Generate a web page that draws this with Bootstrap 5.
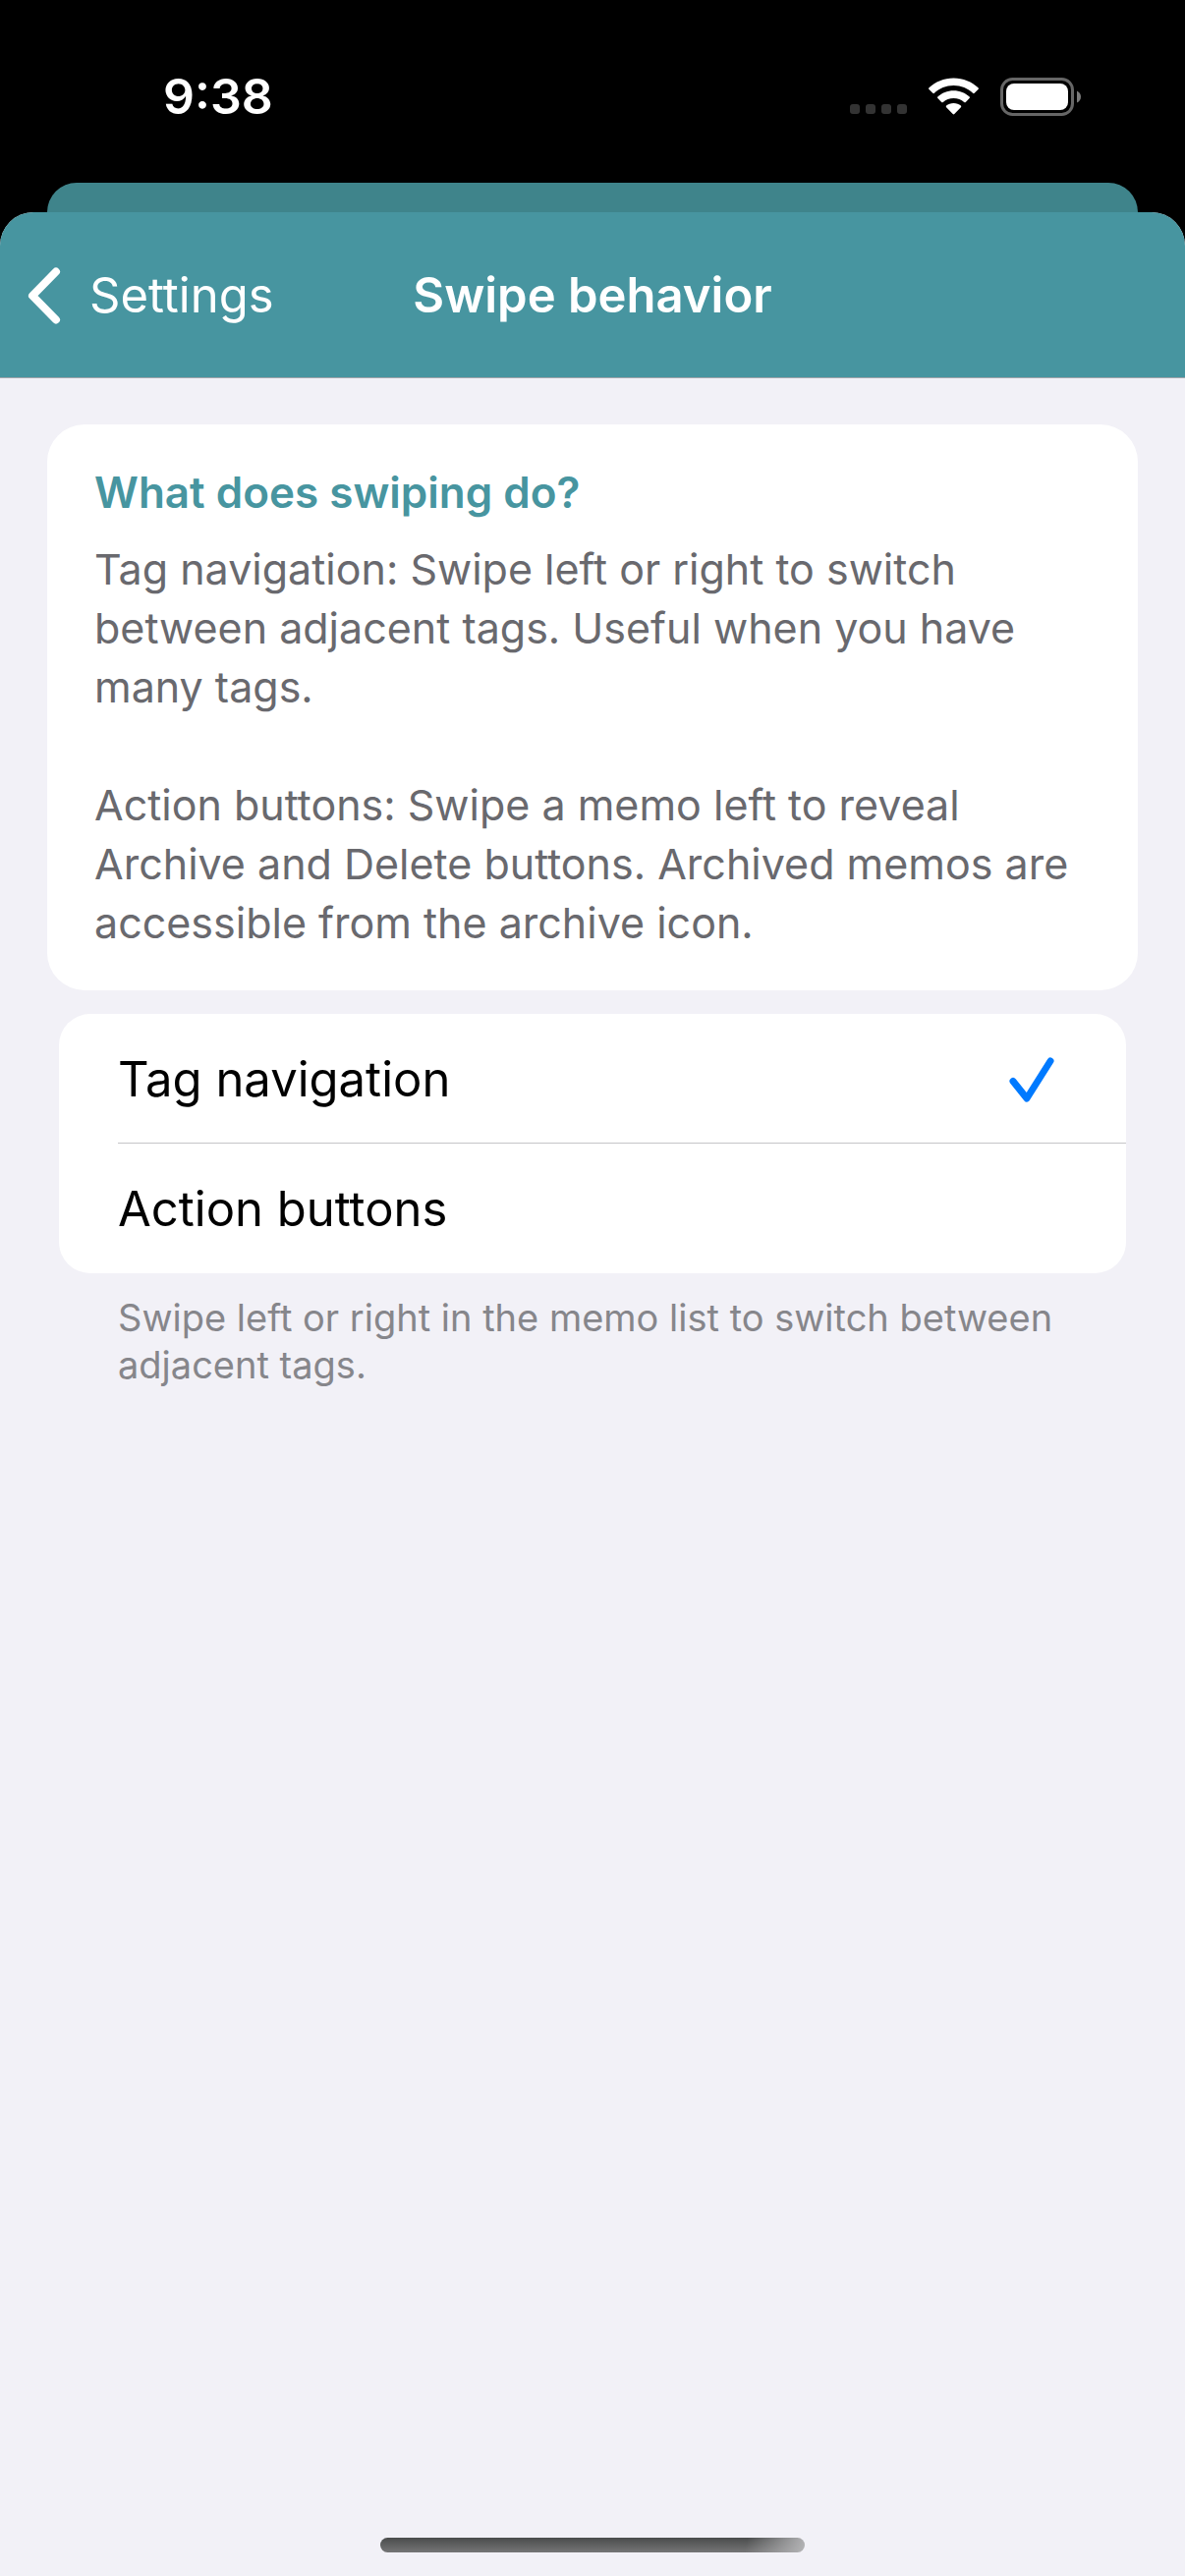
<!DOCTYPE html>
<html lang="en">
<head>
<meta charset="utf-8">
<meta name="viewport" content="width=device-width, initial-scale=1">
<title>Swipe behavior</title>
<link href="https://cdn.jsdelivr.net/npm/bootstrap@5.3.0/dist/css/bootstrap.min.css" rel="stylesheet">
<style>
  :root { --teal: #4795a0; --teal-dim: #3f848b; --grouped: #f2f1f7; }
  body { font-family: Inter, "Noto Sans", sans-serif; font-size: 49px; line-height: 60px; color: #000; background: #000; }
  .status-bar { height: 186px; padding: 10px 106px 0 166px; color: #fff; }
  .clock { font-size: 50px; }
  .status-icons { gap: 22px; }
  .sheet-behind { height: 30px; margin: 0 48px; background: var(--teal-dim); border-radius: 32px 32px 0 0; }
  .sheet { background: var(--grouped); border-radius: 34px 34px 0 0; overflow: hidden; }
  .title-bar { height: 169px; padding: 2px 28px 0; background: var(--teal); border-bottom: 1px solid #a0a5ab; color: #fff; }
  .title-bar h1 { font-size: 49px; line-height: 60px; }
  .back-link { gap: 29px; color: #fff; }
  .content { padding: 47px 48px 0; }
  .info { padding: 39px 48px; border-radius: 38px; font-size: 43px; color: #69696e; }
  .info h2 { margin-bottom: 18px; font-size: 44px; line-height: 60px; color: var(--teal); }
  .info p { margin-bottom: 60px; }
  .options { margin: 24px 12px 0; }
  .choices { border-radius: 32px; overflow: hidden; }
  .choice { padding-left: 60px; cursor: pointer; }
  .choice-row { height: 132px; padding: 2px 72px 0 0; }
  .choice:not(:last-child) .choice-row { border-bottom: 1px solid #c5c5c7; }
  .tick { visibility: hidden; }
  input:checked ~ .choice-row .tick { visibility: visible; }
  .hint { margin: 21px 60px 0; font-size: 38px; line-height: 48px; color: #86868b; }
  .home-bar { width: 432px; height: 15px; margin-bottom: 24px; border-radius: 8px;
    background: linear-gradient(100deg, transparent 86%, #b4b4b6 100%), linear-gradient(#4a4c4c, #757576); }
</style>
</head>
<body class="d-flex flex-column min-vh-100">
  <header class="status-bar d-flex align-items-center justify-content-between">
    <span class="clock fw-semibold">9:38</span>
    <div class="status-icons d-flex align-items-center">
      <svg width="58" height="40" viewBox="0 0 58 40" fill="#333" aria-hidden="true">
        <rect x="0" y="28" width="10" height="10" rx="3"/><rect x="16" y="28" width="10" height="10" rx="3"/>
        <rect x="32" y="28" width="10" height="10" rx="3"/><rect x="48" y="28" width="10" height="10" rx="3"/>
      </svg>
      <svg width="51" height="38" viewBox="0 0 51 38" fill="#fff" role="img" aria-label="Wi-Fi">
        <path d="M25.500 0.500C35.300 0.500 44.200 4.300 50.500 10.300Q51.300 11.100 50.500 12L46.700 15.800Q45.900 16.500 45.100 15.800C40 11 33.100 8.100 25.500 8.100S11 11 5.900 15.800Q5.100 16.500 4.300 15.800L0.500 12Q-0.300 11.100 0.500 10.300C6.800 4.300 15.700 0.500 25.500 0.500Z"/>
        <path d="M25.500 13.200C31.800 13.200 37.500 15.600 41.700 19.500Q42.400 20.300 41.600 21.100L37.800 24.900Q37 25.600 36.200 24.900C33.400 22.400 29.600 20.900 25.500 20.900S17.600 22.400 14.800 24.900Q14 25.600 13.200 24.900L9.400 21.100Q8.600 20.300 9.300 19.500C13.500 15.600 19.200 13.200 25.500 13.200Z"/>
        <path d="M25.500 26C28.400 26 31 27 32.900 28.600Q33.700 29.400 32.900 30.200L26.300 37Q25.500 37.800 24.700 37L18.100 30.200Q17.300 29.400 18.100 28.600C20 27 22.600 26 25.500 26Z"/>
      </svg>
      <svg width="82" height="39" viewBox="0 0 82 39" role="img" aria-label="Battery full">
        <rect x="1.500" y="1.500" width="72" height="36" rx="11" fill="none" stroke="#666" stroke-width="3"/>
        <rect x="6" y="6" width="63" height="27" rx="8" fill="#fff"/>
        <path d="M78 13.500Q82 15.500 82 19.500T78 25.500Z" fill="#7a7a7a"/>
      </svg>
    </div>
  </header>

  <div class="sheet-behind"></div>

  <main class="sheet d-flex flex-column flex-grow-1">
    <nav class="title-bar row g-0 align-items-center" aria-label="Title bar">
      <div class="col d-flex">
        <a href="#" class="back-link d-flex align-items-center text-decoration-none">
          <svg width="34" height="58" viewBox="0 0 34 58" fill="none" stroke="#fff" stroke-width="8" stroke-linecap="round" stroke-linejoin="round" aria-hidden="true"><path d="M29 4.500L5 29L29 53.500"/></svg>
          Settings
        </a>
      </div>
      <h1 class="col-auto mb-0 fw-semibold">Swipe behavior</h1>
      <div class="col"></div>
    </nav>

    <div class="content">
      <section class="info bg-white">
        <h2 class="fw-semibold">What does swiping do?</h2>
        <p>Tag navigation: Swipe left or right to switch between adjacent tags. Useful when you have many tags.</p>
        <p class="mb-0">Action buttons: Swipe a memo left to reveal Archive and Delete buttons. Archived memos are accessible from the archive icon.</p>
      </section>

      <form class="options">
        <div class="choices bg-white">
          <label class="choice d-block">
            <input class="visually-hidden" type="radio" name="swipe" value="tags" checked>
            <span class="choice-row d-flex align-items-center justify-content-between">
              Tag navigation
              <svg class="tick" width="48" height="46" viewBox="0 0 48 46" fill="none" stroke="#007aff" stroke-width="7" stroke-linecap="round" stroke-linejoin="round" aria-hidden="true"><path d="M5 24.500L19 42L43 4"/></svg>
            </span>
          </label>
          <label class="choice d-block">
            <input class="visually-hidden" type="radio" name="swipe" value="actions">
            <span class="choice-row d-flex align-items-center justify-content-between">
              Action buttons
              <svg class="tick" width="48" height="46" viewBox="0 0 48 46" fill="none" stroke="#007aff" stroke-width="7" stroke-linecap="round" stroke-linejoin="round" aria-hidden="true"><path d="M5 24.500L19 42L43 4"/></svg>
            </span>
          </label>
        </div>
        <p class="hint">Swipe left or right in the memo list to switch between adjacent tags.</p>
      </form>
    </div>

    <div class="home-bar mt-auto mx-auto"></div>
  </main>
<script src="https://cdn.jsdelivr.net/npm/bootstrap@5.3.0/dist/js/bootstrap.bundle.min.js"></script>
</body>
</html>
